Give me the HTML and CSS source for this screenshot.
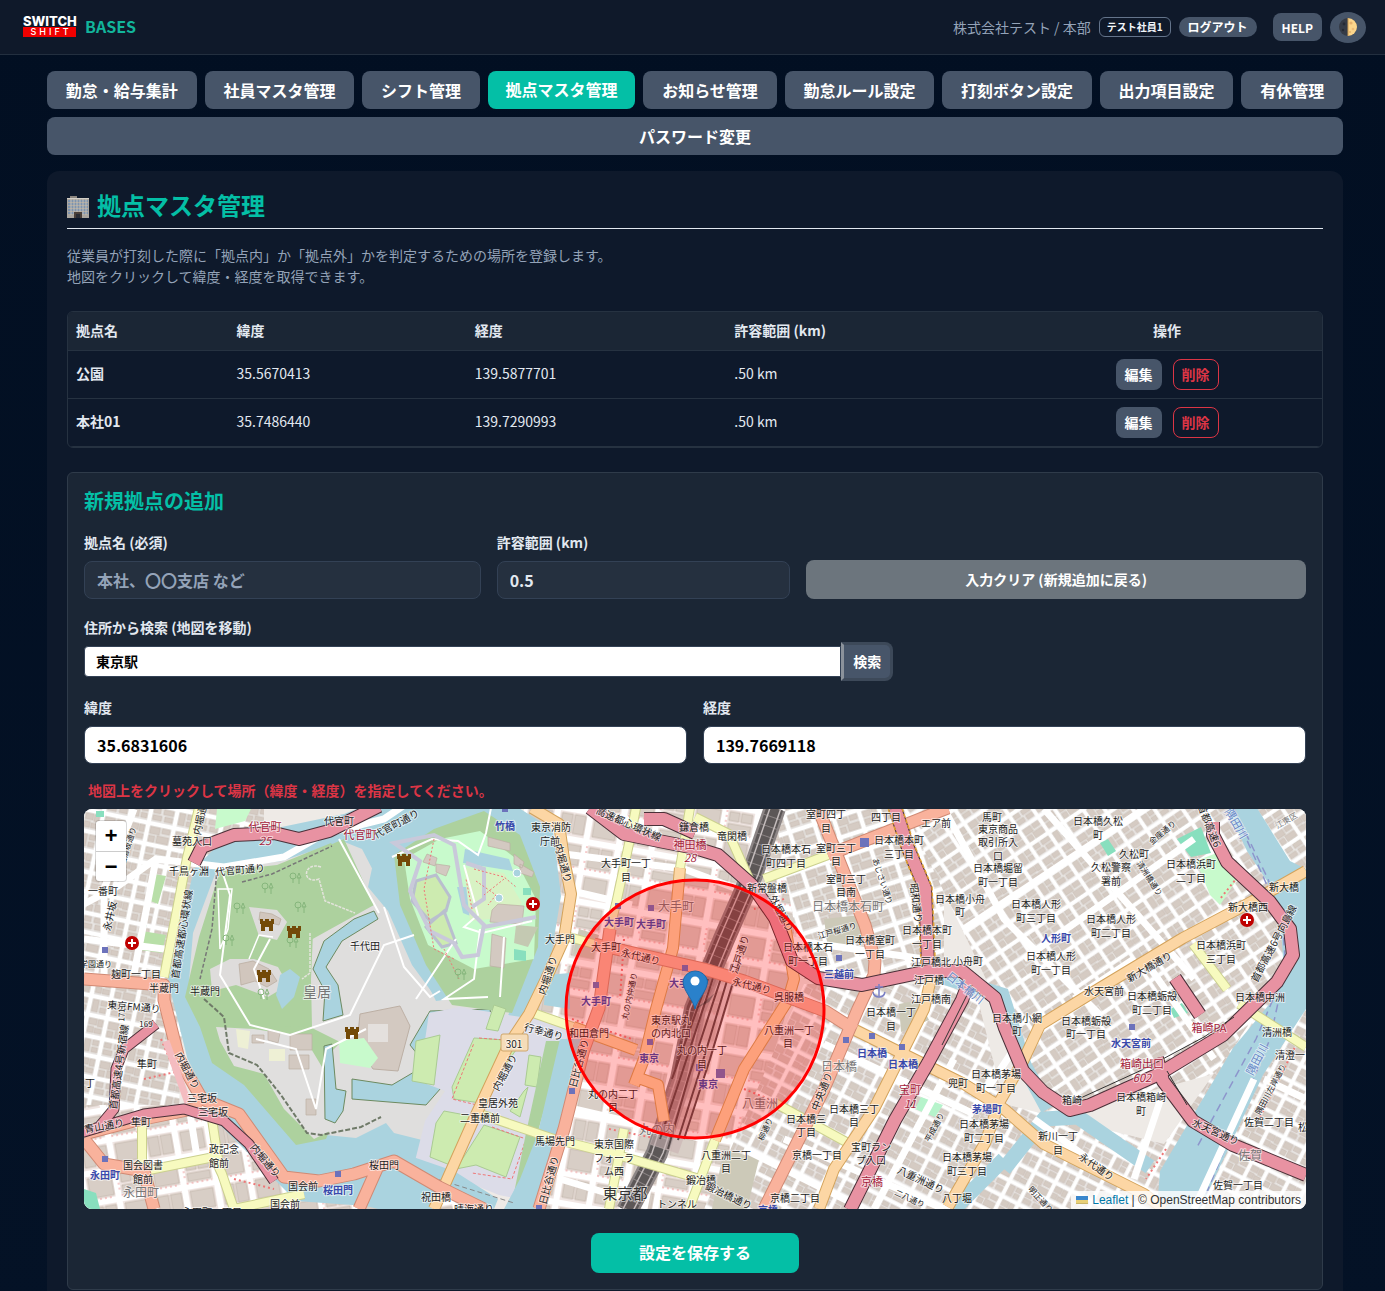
FILE: index.html
```html
<!DOCTYPE html>
<html lang="ja">
<head>
<meta charset="utf-8">
<meta name="viewport" content="width=device-width, initial-scale=1">
<title>拠点マスタ管理</title>
<link rel="stylesheet" href="styles.css">
</head>
<body>
<header class="topbar">
  <div class="brand">
    <div class="logo"><span class="logo-top">SWITCH</span><span class="logo-bottom">SHIFT</span></div>
    <span class="brand-name">BASES</span>
  </div>
  <div class="account">
    <span class="company">株式会社テスト / 本部</span>
    <span class="user-badge">テスト社員1</span>
    <button class="logout" type="button">ログアウト</button>
    <button class="help" type="button">HELP</button>
    <button class="theme" type="button" aria-label="テーマ切替">
      <svg width="18" height="18" viewBox="0 0 18 18"><circle cx="9" cy="9" r="9" fill="#353b46"/><path d="M9 0a9 9 0 0 1 0 18z" fill="#fbd58b"/><path d="M9 0v18" stroke="#c99a54" stroke-width="1"/><circle cx="12" cy="5" r="1.6" fill="#e6b06c"/><circle cx="14" cy="11" r="1.3" fill="#edbb76"/><circle cx="11" cy="14" r="1" fill="#e6b06c"/><circle cx="5" cy="6" r="1.4" fill="#252a34"/><circle cx="4" cy="12" r="1.2" fill="#252a34"/></svg>
    </button>
  </div>
</header>
<main class="container">
  <nav class="tabs">
    <a href="#">勤怠・給与集計</a>
    <a href="#">社員マスタ管理</a>
    <a href="#">シフト管理</a>
    <a href="#" class="active">拠点マスタ管理</a>
    <a href="#">お知らせ管理</a>
    <a href="#">勤怠ルール設定</a>
    <a href="#">打刻ボタン設定</a>
    <a href="#">出力項目設定</a>
    <a href="#">有休管理</a>
    <a href="#">パスワード変更</a>
  </nav>
  <section class="panel">
    <h1 class="title">
      <svg width="22" height="22" viewBox="0 0 22 22"><path d="M3 0h7v2H3z" fill="#8b8680"/><path d="M0 2h22v20H0z" fill="#aaa69f"/><path d="M0 2h22v1H0z" fill="#d3cfc7"/><g fill="#7d93ae"><path d="M1 4h20v2H1zM1 7h20v2H1zM1 10h20v2H1zM1 13h20v2H1zM1 16h20v2H1z"/></g><path d="M4 3v16M7 3v16M10 3v16M13 3v16M16 3v16M19 3v16" stroke="#c4bfb6" stroke-width="1"/><path d="M7 16h8v6H7z" fill="#4b4039"/><path d="M9 18h4v4H9z" fill="#2a2c34"/></svg>
      <span>拠点マスタ管理</span>
    </h1>
    <p class="lead">従業員が打刻した際に「拠点内」か「拠点外」かを判定するための場所を登録します。<br>地図をクリックして緯度・経度を取得できます。</p>
    <div class="table-wrap">
      <table class="bases">
        <colgroup><col class="c1"><col class="c2"><col class="c3"><col class="c4"><col class="c5"></colgroup>
        <thead><tr><th>拠点名</th><th>緯度</th><th>経度</th><th>許容範囲 (km)</th><th class="ops">操作</th></tr></thead>
        <tbody>
          <tr><td class="name">公園</td><td>35.5670413</td><td>139.5877701</td><td>.50 km</td><td class="ops"><div class="row-buttons"><button class="edit" type="button">編集</button><button class="delete" type="button">削除</button></div></td></tr>
          <tr><td class="name">本社01</td><td>35.7486440</td><td>139.7290993</td><td>.50 km</td><td class="ops"><div class="row-buttons"><button class="edit" type="button">編集</button><button class="delete" type="button">削除</button></div></td></tr>
        </tbody>
      </table>
    </div>
    <form class="card">
      <h2 class="card-title">新規拠点の追加</h2>
      <div class="grid">
        <div class="field span4"><label for="name">拠点名 (必須)</label><input id="name" class="dark" type="text" placeholder="本社、〇〇支店 など"></div>
        <div class="field span3"><label for="range">許容範囲 (km)</label><input id="range" class="dark" type="text" value="0.5"></div>
        <div class="span5 bottom"><button class="clear" type="button">入力クリア (新規追加に戻る)</button></div>
        <div class="field search-field span8"><label for="address">住所から検索 (地図を移動)</label>
          <div class="search"><input id="address" type="text" value="東京駅"><button type="button">検索</button></div></div>
        <div class="field span6"><label for="lat">緯度</label><input id="lat" class="light" type="text" value="35.6831606"></div>
        <div class="field span6"><label for="lng">経度</label><input id="lng" class="light" type="text" value="139.7669118"></div>
      </div>
      <p class="notice">地図上をクリックして場所（緯度・経度）を指定してください。</p>
      <div class="map">
        <svg class="map-canvas" viewBox="0 0 1222 400" preserveAspectRatio="xMidYMid slice" role="img" aria-label="東京駅周辺の地図">
          <defs>
            <g id="blocks">
              <rect width="46" height="40" fill="#e8e5e3"/>
              <g fill="#d5cbc3" stroke="#c6bab0" stroke-width=".6">
                <path d="M3 3h8v6H3zM12 3h5v7h-5zM3 11h6v6H3zM10 12h7v5h-7z"/>
                <path d="M23 3h10v7H23zM35 3h8v5h-8zM23 12h6v6h-6zM31 11h12v7H31z"/>
                <path d="M3 24h6v12H3zM11 24h6v5h-6zM11 31h6v5h-6z"/>
                <path d="M23 24h7v5h-7zM23 31h9v5h-9zM33 24h10v5H33zM35 31h8v5h-8z"/>
              </g>
              <path d="M0 0h46M0 21h46M0 0v40M20 0v40" stroke="#fff" stroke-width="4"/>
              <path d="M0 40h46M46 0v40" stroke="#fff" stroke-width="4"/>
            </g>
            <g id="towers">
              <rect width="66" height="60" fill="#f0e6e3"/>
              <g fill="#d8cec6" stroke="#c2b5aa" stroke-width=".8">
                <path d="M5 5h24v20H5zM38 5h10v9H38zM50 5h11v9H50zM38 17h23v8H38z"/>
                <path d="M5 35h11v19H5zM18 35h11v19H18zM38 35h23v19H38z"/>
              </g>
              <path d="M0 0h66v60H0zM33 0v60M0 30h66" fill="none" stroke="#fff" stroke-width="6"/>
              <path d="M4 27h25M36 27h26M35 4v20" stroke="#e98080" stroke-width=".8" stroke-dasharray="2 3"/>
            </g>
            <pattern id="pw" width="46" height="40" patternUnits="userSpaceOnUse" patternTransform="rotate(12)"><use href="#blocks"/></pattern>
            <pattern id="psw" width="66" height="60" patternUnits="userSpaceOnUse" patternTransform="rotate(-10)"><use href="#towers"/></pattern>
            <pattern id="pc" width="66" height="60" patternUnits="userSpaceOnUse" patternTransform="translate(4 6) rotate(10)"><use href="#towers"/></pattern>
            <pattern id="pn" width="46" height="40" patternUnits="userSpaceOnUse" patternTransform="rotate(-18)"><use href="#blocks"/></pattern>
            <pattern id="pne" width="46" height="40" patternUnits="userSpaceOnUse" patternTransform="rotate(-34) scale(.9)"><use href="#blocks"/></pattern>
            <pattern id="ps" width="46" height="40" patternUnits="userSpaceOnUse" patternTransform="rotate(27) scale(.9)"><use href="#blocks"/></pattern>
            <g id="castle"><path d="M0 0h3v2h2V0h4v2h2V0h3v5h-1v7H9V8H5v4H1V5H0z" fill="#734a08"/></g>
            <g id="hospital"><circle r="7" fill="#bf0000"/><path d="M-4 0h8M0-4v8" stroke="#fff" stroke-width="2"/></g>
            <g id="trees" fill="none" stroke="#86b67c" stroke-width="1"><path d="M3 10V5M0 3a3 3 0 0 1 6 0 3 3 0 0 1-6 0M9 11V4M7 5l2-5 2 5z"/></g>
            <path id="secondary" d="M115-1l-12 50-23 119M552-1l-6 31-14 65-8 31M485 128l25 7M606-1l-10 60M611 8l34 17 20 45M680 70l64-24M449 204l40 14M393 304l77 26 60 15 86 25M691 294l73 40M1109 135l34 45M1155 195l67 43M60 362l70-14 8 17 12 35 70-15M58 315v45M128 310l6 40M540 320l-15 80M631 331l-26 69"/>
            <path id="primary" d="M448-1l27 16 5 35 7 35-7 45-18 40-17 35-20 30-35 75-40 90M596 59l-7 80-17 61-12 50-10 26M489 218l63 23M552 268l22 8 6 36M700 110l10 60-6 21-44 69-29 71M848 165l-8 35-25 50-25 50-40 60-15 40M771 221l109 54 40 25 40 35 100 50 20 15M1222 62l-53 30-70 37-83 50-60 37-17 36-23 40-15 42-37 64"/>
            <path id="trunk" d="M0 170l40 3 40 3v15l15 59 23 40 37 15 25 35 20 28 35 4 35-7 40-13 45 26 45 22M0 325l50-13 68-14M0 330l20 25 40 7 10 38M295 355l-20 45M526 120l-11 79-15 41-20 80-25 80M510 135l110 25 40 12 81 30 30 19M734-1l20 50 27 67 10 36-1 14-16 34-34 80-50 100-10 20M744 46L864-1"/>
            <path id="express" d="M110 54l8-16 32-12 40-2 25 6 30-8 50-25M506-1l34 26 40 8 31 6 23 7 34 30 23 33 17 43 26 17 44 7 66-14h34l33 27 10 30 18 43 20 21 27 18 20-5 67-30 66-40 54-53 16-27-3-26-20-27-43-40-14-27v-13M560 10h20l31 14M1073 249l6 23 30 40 40 24 73 30M1091 169l25 37M811-1l13 40 17 40 3 76M888 165l-10 26-34 63-33 57-45 90"/>
            <path id="shinjuku" d="M72 215l-32 25-8 20-2 40-15 18-15 5 60-18 40-5 40 12 25 23 25 37"/>
            <path id="rail" d="M691-1L668 66l-28 64-29 70-14 70-24 74-30 58"/>
          </defs>

          <!-- districts -->
          <rect width="1222" height="400" fill="#eeeae6"/>
          <path d="M0 0h180v60l-80 110-5 130H0z" fill="url(#pw)"/>
          <path d="M0 296h130l80 70 110-10 60 44H0z" fill="url(#psw)"/>
          <path d="M440 0h270v180l-70 220H440z" fill="url(#pc)"/>
          <path d="M690 0h170v170H720z" fill="url(#pn)"/>
          <path d="M820 0h402v240l-260 70-60-140z" fill="url(#pne)"/>
          <path d="M720 175h170l30 120 160 40 142-200v265H620z" fill="url(#ps)"/>
          <g fill="#ccc9b8"><path d="M815 195l20-4 10 20-28 12zM640 340l35 10-12 50h-35zM495 120l20 6-6 24-20-5zM740 110l45-5 5 25-46 10z"/></g>

          <!-- water and palace grounds -->
          <path d="M110 60l30-30 120-25 15-6h160l34 22 8 66-10 60-45 95-80 170-60-15-70-5-80-80-28-60-20-80z" fill="#aad3df"/>
          <path d="M133 60l65-8 60-20 20 8 32 62 22 50 20 40 30-4 50-4-14 40-40 75-28 35-40-10-8-10-30 15-50-5-50-55-34-20-20-30-14-35 5-60z" fill="#dfdedd"/>
          <path d="M136 62l58-4 66-28 30 66-65 36-40 60 45 28 40 20-8 40-20 50-30 6-52-60-32-22-12-36-15-30 14-60z" fill="#add19e"/>
          <path d="M137 62l56-6 54-22 42 60-60 30-2 46 1 48-85-1-24-45 18-30z" fill="#add19e"/>
          <path d="M132 218l38 2 50 8 24 40 10 50-24 12-30-30-20-35-30-8-14-25z" fill="#e0dfde"/>
          <path d="M165 98l28 3 10 12-10 18-18-4zM126 160l20-10 24 0 24 8 10 18-20 12-32-12-24 6z" fill="#dedcdb"/>
          <path d="M176 103l12 2 9 5-2 6-20-5zM155 155l14-3 16 8 8 12-10 6-12-6-14 4z" fill="#d1c6bd" stroke="#bbaea2" stroke-width=".8"/>
          <path d="M240 250l60-60 18 20-10 80-60 30z" fill="#dfdedd"/>
          <path d="M276 205l40-8 10 20-12 45-25-2-16-25z" fill="#d3c9c1" stroke="#bcafa4"/>
          <path d="M284 215h20v18h-20z" fill="#e4e0dd"/>
          <path d="M255 232l25-3 14 20-8 10-30-5z" fill="#c8facc"/>
          <path d="M152 220l14 2-2 18-10-2zM185 240h16v12h-16z" fill="#eef0d5"/>
          <path d="M168 226h12v8h-12zM184 221l12 3-2 10-10-3zM206 225h22v16h-22zM205 246h20v14h-20zM222 290h10v16h-10z" fill="#d3c9c1" stroke="#bcafa4" stroke-width=".7"/>
          <g fill="#aad3df" stroke="#6d8a60" stroke-width="1">
            <path d="M240 132l30-22 20-8 4 8-36 22-16 26 12 18 5 30-20 6 2-30-12-22z"/>
            <path d="M240 237l8-2 4 45 10 2-3 20-8 12-10-4z"/>
            <path d="M268 270l40 6 34-20-16-20 20-34 60-2 2 14-40 6-16 28 20 14-30 34-74-6z"/>
            <path d="M196 166l10-6 10 8-6 20-12 12-6-14z" stroke="none"/>
          </g>
          <path d="M290 50l24 8 30 80 16 32-10 16-22-30-24-54-20-24z" fill="#aad3df"/>
          <path d="M310 46l40-26 50-18 36 24 20 52-2 60-26 66-60-8-26-40-26-60z" fill="#add19e"/>
          <path d="M320 50l36-20 40-8 34 26 22 42-2 60-60 10-46-24-18-46z" fill="#c8facc"/>
          <path d="M332 72l20-6 14 22-4 14-16 10-18-20zM342 118l18-16 12 32-14 4z" fill="#cdebb0" stroke="#b9bfce" stroke-width="3"/>
          <path d="M381 40l44 10 4 12-50-8zM373 78h12l4 30-10-4z" fill="#aad3df"/>
          <path d="M380 58l40 6 18 30-12 14-40 4z" fill="#d8f2c4"/>
          <path d="M414 95l26 2-2 18-32-2 2-12zM404 28l22 6v8l-22-5zM343 45l10 4-2 8-12-4zM352 55l14 2-4 10-10-4zM430 45l10 8-2 6-8-4zM408 125l14 4-2 30-14-2zM436 55l14 8-2 5-12-4z" fill="#d3c9c1" stroke="#bcafa4" stroke-width=".7"/>
          <path d="M430 140l12 2v10l-12-1zM439 79h8v7h-8z" fill="#88dfbe"/>
          <path d="M432 116l22 2-10 20-14-4z" fill="#c4c9b2"/>
          <circle cx="433" cy="64" r="4" fill="#aad3df" stroke="#fff"/><circle cx="415" cy="89" r="4" fill="#aad3df" stroke="#fff"/>
          <g fill="none" stroke="#fff" stroke-width="2">
            <path d="M308 48l40-18 26 2 20 14 8-22 6-30M380 56l14 50-14 12 18 6 50-12M396 120l-6 50-30 20 44-2M420 128l-4 60M372 130l-40 60M138 62l8 24-10 80 30 50 40 10 60-20 34-70 30-10"/>
            <path d="M172 230l40 10 20 60 10-60 40-20M186 130l-16 30 10 30M255 30l40 74M300 98l20 60 26 30 10-6"/>
          </g>
          <path d="M310 34l40-8 20 10 10 60 20 20-6 30-16 2-8-14-24-12-20-40 10-30zM382 54l18 6v30l-12 8M400 118l52-10" fill="none" stroke="#c9c9da" stroke-width="4"/>
          <g fill="none" stroke="#e77" stroke-width="1" stroke-dasharray="2 2"><path d="M350 30l-10 50 10 60 20 10M390 60l30 8 12 10M392 72l20 14-8 10M360 140l15 30M388 100l-6-30M420 70l-20 16"/></g>
          <path d="M158 73l30-8 60-28M133 60l-5 60-12 50" fill="none" stroke="#777" stroke-width="1.5" stroke-dasharray="4 2"/>
          <path d="M237 58c-18-6-20 18-2 12l6 22 30 12M226 124v40l-8 6" fill="none" stroke="#e4e4dc" stroke-width="1.5" stroke-dasharray="3 1"/>
          <path d="M120 190l20 18 5 36 28 12 24 30 26 38 14 2 40-8 20-10" fill="none" stroke="#6f7a68" stroke-width="2" stroke-dasharray="5 2"/>
          <path d="M134 80h14l-4 40-8 20zM165 150l10-24 14 2" fill="none" stroke="#fff" stroke-width="1.5"/>
          <use href="#trees" x="178" y="74"/><use href="#trees" x="206" y="64"/><use href="#trees" x="150" y="94"/><use href="#trees" x="211" y="93"/><use href="#trees" x="139" y="126"/><use href="#trees" x="203" y="128"/><use href="#trees" x="174" y="180"/><use href="#trees" x="371" y="160"/>

          <!-- outer garden -->
          <path d="M345 204l30-6 62 10 50 4-20 80-22 100-30-6-84-34 10-40 20-30-26-10z" fill="#dcdce8"/>
          <path d="M390 229l48 3-42 62-26-4-2-12zM410 196l12 4-8 22-12-2zM332 232l24-6-6 50-22-4zM445 246l12 2-4 30-12-2zM440 282l4-4-8 30-10-6zM360 302l32 6-26 48-20-8 6-34zM400 316l36 12-14 40-30-12-20 4z" fill="#cdebb0" stroke="#aacb93"/>
          <path d="M395 229l38 3-40 64-25-6 22-56M408 318l34 12-14 40-40-6" fill="none" stroke="#e77" stroke-dasharray="3 2"/>
          <path d="M462 232h18l-26 90-10 60-16 12 14-70z" fill="#add19e"/>
          <path d="M476 230h22l-30 110-18 60h-30l16-30 18-46z" fill="#aad3df"/>
          <path d="M300 338l70 24 44 28-4 10-110-44z" fill="#aad3df"/>
          <path d="M462 166l24-2v36l-26-4z" fill="#aad3df"/>
          <path d="M340 366l90 28" stroke="#888" stroke-dasharray="5 3"/>

          <!-- rivers -->
          <path d="M1143-1l20 43 20 30 13 34 3 43-6 37-44 53-73 123-3 38h43l63-134 43-66V60l-16-8-33-53z" fill="#aad3df"/>
          <path d="M1150 0l34 70 22 70-20 90-70 170M1158 20l40 90 4 50-30 70-60 110" fill="none" stroke="#8d95cc" stroke-width="1.5" stroke-dasharray="8 5"/>
          <path d="M920 360l40-50 34-2 72 50M840 162l78 24 22 70 24 44M870 400l50-50" fill="none" stroke="#aad3df" stroke-width="15"/>
          <path d="M1093 30l24-12 10 26-20 4z" fill="#88dfbe"/><path d="M1112 52l26-10 18 24-20 30-10-10z" fill="#c8facc"/>
          <path d="M1016 34l8-4 8 12-8 5zM1086 200l12-6 6 10-14 5zM0 380l12 4 4 16H0zM12 2h8v6h-8zM60 105l3 12-3 2z" fill="#88dfbe"/>
          <path d="M837 288l22 8-8 12-20-8z" fill="#b6f3cb"/>
          <path d="M70 65l12 2-8 28-10-4zM58 122l24 4-4 18-22-3z" fill="#b8dfa8"/><path d="M133 0h34l-6 12-30 8z" fill="#c8facc"/>
          <path d="M77 230l26 60M60 270l36-8M488 210l60 20M540 130l-4 60M590 110l-6 60M700 90l-30 10M1160 60l-24 30M1215 230l-40 80M1082 340l-20 30M660 280l50 20M525 320l50 10M150 370l40 10" fill="none" stroke="#e77" stroke-width="2" stroke-dasharray="2 3"/>

          <!-- minor roads -->
          <g fill="none" stroke="#fff" stroke-width="7">
            <path d="M0 95l34-18 38-27 68 8 60-10 40-23 60-15 22-15M72 50L50 165M50 0L20 80v86M0 130l80 10M105 298l8 50"/>
            <path d="M480 45l120 15 80 30M488 82l60 14M490 300l130 30M600 200l-40 200M476 370l60 18"/>
            <path d="M700 130l140 20M720 160l-16-30M860 0l60 110 96 96M960 0l150 170M880 120L1060 0M940 150L1110 30M990 190l60-40M1060 150l70 100M740 235l150 70M700 330l160 70M660 340l120 60M870 250l-80 150M930 240l-40 60M1180 270l42 20M1110 400l60-130M950 310l110 80M1080 280l-30 90"/>
          </g>

          <!-- railway -->
          <g fill="none">
            <use href="#rail" stroke="#8c8585" stroke-width="22"/>
            <use href="#rail" stroke="#5c5757" stroke-width="17" stroke-dasharray="9 1"/>
            <use href="#rail" x="6" stroke="#c4bcbc" stroke-width="1.5"/>
            <use href="#rail" x="-5" stroke="#c4bcbc" stroke-width="1.5"/>
            <path d="M640 160l-36 110-24 70" stroke="#c9b3b3" stroke-width="30" stroke-opacity=".6"/>
            <path d="M656 150l-30 100-26 80M648 155l-30 100-24 76M640 160l-36 110-20 70M632 160l-36 110-20 60M624 170l-36 100" stroke="#564a4a" stroke-width="2"/>
          </g>

          <!-- roads, casing first -->
          <g fill="none" stroke-linejoin="round">
            <use href="#secondary" stroke="#cbd08f" stroke-width="10"/><use href="#secondary" stroke="#f7fabf" stroke-width="8"/>
            <use href="#primary" stroke="#d3a35c" stroke-width="12"/><use href="#primary" stroke="#fcd6a4" stroke-width="10"/>
            <use href="#trunk" stroke="#d08a74" stroke-width="13"/><use href="#trunk" stroke="#f9b29c" stroke-width="11"/>
            <path d="M82 232l22 62" stroke="#f4bcc0" stroke-width="7"/>
            <use href="#express" stroke="#4b3038" stroke-width="14"/><use href="#express" stroke="#e892a2" stroke-width="12"/>
            <use href="#shinjuku" stroke="#4b3038" stroke-width="11"/><use href="#shinjuku" stroke="#e892a2" stroke-width="9"/>
            <path d="M818-1l13 39 17 40 3 70M837 155l-3-74-16-40-14-42" stroke="#e0a030" stroke-width="1.5" stroke-dasharray="4 2"/>
            <path d="M990 292l70-32 60-32 30-20M888 176l-30 60M1083 262l20 34" stroke="#333"/>
          </g>

          <!-- symbols -->
          <path fill="#6c72bb" d="M18 138h6v6h-6zM18 347h6v6h-6zM251 362h6v6h-6zM418-1h6v4h-6zM485 279h6v6h-6zM776 29h9v9h-9zM752 146h6v6h-6zM759 228h6v6h-6zM785 224h6v6h-6zM815 235h6v6h-6zM1045 215h6v6h-6zM531 94h6v6h-6zM564 96h6v6h-6zM598 156h6v6h-6zM509 173h6v6h-6zM563 230h6v6h-6zM612 255h7v7h-7zM632 260h9v9h-9zM452 396h6v4h-6z"/>
          <use href="#castle" x="176" y="110"/><use href="#castle" x="203" y="117"/><use href="#castle" x="173" y="161"/><use href="#castle" x="261" y="218"/><use href="#castle" x="313" y="45"/>
          <use href="#hospital" x="48" y="134"/><use href="#hospital" x="449" y="95"/><use href="#hospital" x="1163" y="111"/>
          <path d="M795 175v12M791 178h8M789 183q1 5 6 5t6-5" fill="none" stroke="#7b7fc4" stroke-width="1.5"/>
          <rect x="417" y="225" width="27" height="17" rx="2" fill="#f5dcb9" stroke="#cfa66a"/><text class="lb" x="430" y="234">301</text>

          <!-- labels -->
          <g class="lb">
            <text x="108" y="31">墓苑入口</text><text x="255" y="11">代官町</text><text x="105" y="61">千鳥ヶ淵</text><text x="156" y="60" transform="rotate(-5 156 60)">代官町通り</text><text x="312" y="14" transform="rotate(-28 312 14)">代官町通り</text><text x="19" y="81">一番町</text><text x="25" y="107" transform="rotate(-78 25 107)">永井坂</text><text x="12" y="154" class="sm">学園通り</text><text x="52" y="164">麹町一丁目</text><text x="80" y="178">半蔵門</text><text x="121" y="181">半蔵門</text><text x="50" y="197" transform="rotate(5 50 197)">東京FM通り</text><text x="62" y="214" class="sm">169</text><text x="37" y="206" class="sm" transform="rotate(-88 37 206)">171</text><text x="63" y="254">隼町</text><text x="116" y="6" transform="rotate(-78 116 6)">内堀通り</text><text x="104" y="261" transform="rotate(62 104 261)">内堀通り</text><text x="97" y="125" transform="rotate(-81 97 125)">首都高速都心環状線</text><text x="34" y="258" transform="rotate(-82 34 258)">首都高速4号新宿線</text><text x="118" y="288">三宅坂</text><text x="129" y="302">三宅坂</text><text x="57" y="312">隼町</text><text x="20" y="316" transform="rotate(-10 20 316)">青山通り</text><text x="140" y="339">政記念</text><text x="135" y="353">館前</text><text x="59" y="355">国会図書</text><text x="59" y="369">館前</text><text x="182" y="351" transform="rotate(50 182 351)">内堀通り</text><text x="219" y="376">国会前</text><text x="201" y="394">国会前</text><text x="300" y="355">桜田門</text><text x="281" y="136">千代田</text><text x="6" y="273">丁</text><text x="128" y="402">永田町一丁目</text><text x="43" y="37" class="sm" transform="rotate(-72 43 37)">袖摺坂通り</text>
            <text x="467" y="17">東京消防</text><text x="466" y="31">庁前</text><text x="480" y="54" transform="rotate(75 480 54)">内堀通り</text><text x="542" y="53">大手町一丁</text><text x="542" y="67">目</text><text x="476" y="129">大手門</text><text x="522" y="137">大手町</text><text x="557" y="147" transform="rotate(14 557 147)">永代通り</text><text x="463" y="166" transform="rotate(-72 463 166)">内堀通り</text><text x="460" y="222" transform="rotate(15 460 222)">行幸通り</text><text x="505" y="223">和田倉門</text><text x="420" y="263" transform="rotate(-62 420 263)">内堀通り</text><text x="414" y="293">皇居外苑</text><text x="396" y="308">二重橋前</text><text x="471" y="331">馬場先門</text><text x="494" y="254" transform="rotate(-75 494 254)">日比谷通り</text><text x="464" y="371" transform="rotate(-75 464 371)">日比谷通り</text><text x="352" y="387">祝田橋</text><text x="530" y="334">東京国際</text><text x="530" y="348">フォーラ</text><text x="530" y="361">ム西</text><text x="593" y="394">トンネル</text><text x="529" y="284">丸の内二丁</text><text x="529" y="297">目</text><text x="587" y="210">東京駅丸</text><text x="587" y="223">の内北口</text><text x="618" y="240">丸の内一丁</text><text x="618" y="254">目</text><text x="545" y="187" class="sm" transform="rotate(-78 545 187)">丸の内仲通り</text><text x="545" y="14" transform="rotate(24 545 14)">高速都心環状線</text><text x="610" y="17">鎌倉橋</text><text x="617" y="370">鍛冶橋</text><text x="645" y="386" transform="rotate(25 645 386)">鍛冶橋通り</text><text x="390" y="399">晴海通り</text>
            <text x="648" y="26">竜閑橋</text><text x="702" y="39">日本橋本石</text><text x="702" y="53">町四丁目</text><text x="742" y="4">室町四丁</text><text x="742" y="18">目</text><text x="752" y="38">室町三丁</text><text x="752" y="51">目</text><text x="762" y="69">室町三丁</text><text x="762" y="82">目南</text><text x="683" y="78">新常盤橋</text><text x="698" y="104" transform="rotate(62 698 104)">外堀通り</text><text x="802" y="7">四丁目</text><text x="815" y="30">日本橋本町</text><text x="815" y="44">三丁目</text><text x="852" y="13">エア前</text><text x="799" y="72" class="sm" transform="rotate(72 799 72)">あじさい通り</text><text x="833" y="94" transform="rotate(83 833 94)">昭和通り</text><text x="876" y="89">日本橋小舟</text><text x="876" y="102">町</text><text x="753" y="121" class="sm" transform="rotate(-16 753 121)">江戸桜通り</text><text x="786" y="130">日本橋室町</text><text x="786" y="144">一丁目</text><text x="843" y="120">日本橋本町</text><text x="843" y="134">一丁目</text><text x="724" y="137">日本橋本石</text><text x="724" y="151">町一丁目</text><text x="847" y="152">江戸橋北</text><text x="884" y="151">小舟町</text><text x="845" y="170">江戸橋</text><text x="847" y="189">江戸橋南</text><text x="655" y="145" transform="rotate(-72 655 145)">江戸通り</text><text x="668" y="176" transform="rotate(14 668 176)">永代通り</text><text x="705" y="187">呉服橋</text><text x="705" y="220">八重洲一丁</text><text x="704" y="233">目</text><text x="807" y="202">日本橋一丁</text><text x="807" y="216">目</text><text x="737" y="282" transform="rotate(-68 737 282)">中央通り</text><text x="770" y="299">日本橋三丁</text><text x="770" y="312">目</text><text x="722" y="309">日本橋三</text><text x="722" y="322">丁目</text><text x="681" y="320" class="sm" transform="rotate(-65 681 320)">柳通り</text><text x="642" y="345">八重洲二丁</text><text x="642" y="358">目</text><text x="733" y="345">京橋一丁目</text><text x="711" y="388">京橋二丁目</text><text x="787" y="337">宝町ラン</text><text x="787" y="350">プ入口</text><text x="837" y="370" transform="rotate(25 837 370)">八重洲通り</text><text x="826" y="389" class="sm" transform="rotate(25 826 389)">二八通り</text><text x="850" y="318" class="sm" transform="rotate(-62 850 318)">平成通り</text><text x="874" y="273">兜町</text><text x="912" y="264">日本橋茅場</text><text x="912" y="278">町一丁目</text><text x="900" y="314">日本橋茅場</text><text x="900" y="328">町二丁目</text><text x="883" y="347">日本橋茅場</text><text x="883" y="361">町三丁目</text><text x="873" y="388">八丁堀</text>
            <text x="908" y="7">馬町</text><text x="914" y="19">東京商品</text><text x="914" y="32">取引所入</text><text x="914" y="46">口</text><text x="914" y="58">日本橋堀留</text><text x="914" y="72">町一丁目</text><text x="1014" y="11">日本橋久松</text><text x="1014" y="25">町</text><text x="1050" y="44">久松町</text><text x="1027" y="57">久松警察</text><text x="1027" y="71">署前</text><text x="1078" y="23" class="sm" transform="rotate(-40 1078 23)">金座通り</text><text x="1066" y="69" class="sm" transform="rotate(57 1066 69)">清洲橋通り</text><text x="1107" y="54">日本橋浜町</text><text x="1107" y="68">二丁目</text><text x="1200" y="77">新大橋</text><text x="1164" y="97">新大橋西</text><text x="952" y="94">日本橋人形</text><text x="952" y="108">町三丁目</text><text x="1027" y="109">日本橋人形</text><text x="1027" y="123">町二丁目</text><text x="967" y="146">日本橋人形</text><text x="967" y="160">町一丁目</text><text x="1137" y="135">日本橋浜町</text><text x="1137" y="149">三丁目</text><text x="1065" y="157" transform="rotate(-30 1065 157)">新大橋通り</text><text x="1020" y="181">水天宮前</text><text x="1068" y="186">日本橋蛎殻</text><text x="1068" y="200">町二丁目</text><text x="1002" y="211">日本橋蛎殻</text><text x="1002" y="224">町一丁目</text><text x="1176" y="187">日本橋中洲</text><text x="933" y="208">日本橋小網</text><text x="933" y="221">町</text><text x="1193" y="222">清洲橋</text><text x="1206" y="245">清澄一</text><text x="1186" y="280" class="sm" transform="rotate(-62 1186 280)">隅田川左岸通り</text><text x="988" y="290">箱崎</text><text x="1057" y="287">日本橋箱崎</text><text x="1057" y="301">町</text><text x="974" y="326">新川一丁</text><text x="974" y="340">目</text><text x="1013" y="357" transform="rotate(35 1013 357)">永代通り</text><text x="957" y="390" class="sm" transform="rotate(48 957 390)">明正通り</text><text x="1132" y="322" transform="rotate(24 1132 322)">水天宮通り</text><text x="1185" y="312">佐賀二丁目</text><text x="1154" y="375">佐賀一丁目</text><text x="1219" y="317">松</text><text x="1189" y="134" transform="rotate(-62 1189 134)">首都高速6号向島線</text><text x="1126" y="16" transform="rotate(68 1126 16)">首都高速6</text>
          </g>
          <g class="lb area"><text x="233" y="182" class="big">皇居</text><text x="57" y="382">永田町</text><text x="592" y="96">大手町</text><text x="764" y="96">日本橋本石町</text><text x="755" y="256">日本橋</text><text x="676" y="293">八重洲</text><text x="573" y="319">丸の内</text><text x="1166" y="345">佐賀</text><text x="1202" y="11" transform="rotate(-30 1202 11)" class="sm">江東区</text></g>
          <g class="lb city"><text x="541" y="383">東京都</text></g>
          <g class="lb station"><text x="21" y="365">永田町</text><text x="254" y="380">桜田門</text><text x="421" y="16">竹橋</text><text x="535" y="112">大手町</text><text x="567" y="114">大手町</text><text x="512" y="191">大手町</text><text x="600" y="173">大手町</text><text x="565" y="248">東京</text><text x="624" y="274">東京</text><text x="755" y="164">三越前</text><text x="788" y="243">日本橋</text><text x="819" y="254">日本橋</text><text x="903" y="299">茅場町</text><text x="972" y="128">人形町</text><text x="1047" y="233">水天宮前</text><text x="684" y="400">京橋</text></g>
          <g class="lb river"><text x="882" y="178" transform="rotate(38 882 178)">日本橋川</text><text x="1153" y="14" transform="rotate(60 1153 14)">隅田川</text><text x="1172" y="250" transform="rotate(-62 1172 250)">隅田川</text></g>
          <g class="lb exit"><text x="181" y="17">代官町</text><text class="it" x="181" y="31">25</text><text x="276" y="25">代官町</text><text x="606" y="35">神田橋</text><text class="it" x="606" y="48">28</text><text x="826" y="280">宝町</text><text class="it" x="826" y="294">11</text><text x="788" y="372">京橋</text><text x="1125" y="218">箱崎PA</text><text x="1058" y="254">箱崎出口</text><text class="it" x="1058" y="268">602</text></g>

          <!-- base radius and marker -->
          <circle cx="611" cy="200" r="129" fill="#f00" fill-opacity=".25" stroke="#f00" stroke-width="3"/>
          <path d="M611 200l8-6 12-10-6 9z" fill="#000" fill-opacity=".25"/>
          <path d="M611 200c-2-10-12-18-12-28a12.500 12.500 0 0 1 24.500 0c0 10-10 18-12.500 28z" fill="#2a81cb" stroke="#2069a8"/>
          <circle cx="611" cy="172" r="4.500" fill="#fff"/>
        </svg>
        <div class="zoom"><button type="button" aria-label="拡大">+</button><button type="button" aria-label="縮小">−</button></div>
        <div class="credit"><svg width="12" height="8" viewBox="0 0 12 8"><path fill="#3a86cc" d="M0 0h12v4H0z"/><path fill="#e8cf76" d="M0 4h12v3H0z"/><path fill="#c9b56a" d="M0 7h12v1H0z"/></svg><a href="#">Leaflet</a> | © OpenStreetMap contributors</div>
      </div>
      <div class="actions"><button class="save" type="submit">設定を保存する</button></div>
    </form>
  </section>
</main>
</body>
</html>
```
FILE: styles.css
```css
* { box-sizing: border-box; }
body {
  margin: 0;
  background: linear-gradient(#020f22, #041226);
  color: #e2e8f0;
  font: 14px/21px "Noto Sans CJK JP", sans-serif;
}
button, input { font: inherit; color: inherit; margin: 0; }
button { cursor: pointer; border: 0; font-weight: 700; }
h1, h2, p { margin: 0; }

.topbar {
  display: flex;
  justify-content: space-between;
  align-items: center;
  height: 55px;
  padding: 0 19px 0 23px;
  background: #0f192a;
  border-bottom: 1px solid #232f3f;
}
.brand { display: flex; align-items: center; gap: 9px; padding-bottom: 2px; }
.logo { display: flex; flex-direction: column; width: 53px; font-family: Inter, sans-serif; text-align: center; }
.logo-top { font-size: 13px; font-weight: 800; line-height: 12px; color: #fff; }
.logo-bottom { font-size: 9px; line-height: 10px; font-weight: 500; letter-spacing: 3px; padding-left: 3px; background: #f00000; color: #fff; }
.brand-name { font-size: 16px; font-weight: 700; color: #12b59b; }
.account { display: flex; align-items: center; gap: 8px; }
.company { color: #94a3b8; }
.user-badge { border: 1px solid #64748b; border-radius: 6px; padding: 0 7px; font-size: 10px; line-height: 18px; font-weight: 700; color: #f1f5f9; }
.logout { height: 20px; padding: 0 9px; border-radius: 10px; background: #475569; color: #fff; font-size: 12px; line-height: 20px; }
.help { height: 28px; margin-left: 8px; padding: 0 9px; border-radius: 8px; background: #475569; color: #fff; font-size: 12px; }
.theme { display: flex; align-items: center; justify-content: center; width: 36px; height: 31px; padding: 0; border-radius: 50%; background: #475569; }

.container { padding: 16px 42px 16px 47px; }
.tabs { display: flex; flex-wrap: wrap; gap: 8px; }
.tabs a {
  flex: 1 1 auto;
  padding: 0 18px;
  border-radius: 8px;
  background: #475569;
  color: #fff;
  font-size: 16px;
  font-weight: 700;
  line-height: 38px;
  text-align: center;
  text-decoration: none;
}
.tabs a.active { padding: 0 17px; background: #04bfa6; line-height: 36px; }

.panel { margin-top: 16px; padding: 20px; border-radius: 12px; background: #0e192b; }
.title { display: flex; align-items: center; gap: 8px; height: 38px; padding-bottom: 10px; border-bottom: 1px solid #e2e8f0; color: #04bfa6; font-size: 24px; line-height: 27px; }
.title svg { margin-top: 5px; }
.lead { margin: 16px 0 24px; color: #94a3b8; }

.table-wrap { overflow: hidden; border: 1px solid #263241; border-radius: 6px; }
.bases { width: 100%; table-layout: fixed; border-collapse: collapse; }
.c1 { width: 12.8%; } .c2 { width: 19%; } .c3 { width: 20.7%; } .c4 { width: 22.8%; } .c5 { width: 24.7%; }
.bases th, .bases td { padding: 0 8px; text-align: left; border-bottom: 1px solid #263241; }
.bases th { height: 38px; background: #1b2635; font-weight: 700; }
.bases td { height: 48px; padding-bottom: 2px; }
.bases .name { font-weight: 700; }
.bases .ops { padding-bottom: 0; text-align: center; }
.row-buttons { display: flex; justify-content: center; gap: 11px; }
.row-buttons button { height: 31px; padding: 0 9px; border-radius: 8px; }
.edit { background: #475569; color: #fff; }
.row-buttons .delete { padding: 0 8px; border: 1px solid #dc3545; background: transparent; color: #dc3545; }

.card { margin-top: 24px; padding: 16px; border: 1px solid #2f3b4a; border-radius: 6px; background: #1b2635; }
.card-title { color: #04bfa6; font-size: 20px; line-height: 24px; }
.grid { display: grid; grid-template-columns: repeat(12, 1fr); gap: 16px; margin-top: 19px; }
.span3 { grid-column: span 3; }
.span4 { grid-column: span 4; }
.span5 { grid-column: span 5; }
.span6 { grid-column: span 6; }
.span8 { grid-column: span 8; }
.field { display: flex; flex-direction: column; gap: 8px; min-width: 0; }
.field label { font-weight: 700; }
.field input { width: 100%; border: 1px solid #334155; font-weight: 700; padding: 0 12px; }
.dark { height: 38px; border-radius: 8px; background: #25303f; font-size: 16px; }
.dark::placeholder { color: #94a3b8; opacity: 1; font-weight: 700; }
.light { height: 38px; border-radius: 8px; background: #fff; color: #000; font-size: 16px; }
.bottom { display: flex; align-items: flex-end; }
.clear { width: 100%; height: 39px; border-radius: 8px; background: #6c757d; color: #fff; }
.search-field { margin-top: 2px; gap: 4px; }
.search { display: flex; align-items: center; }
.field .search input { flex: 1; min-width: 0; height: 31px; padding: 0 11px; border-radius: 4px 0 0 4px; background: #fff; color: #000; }
.search button { height: 39px; padding: 0 9px; border: 3px solid #3d4959; border-left-color: #8b929b; border-radius: 0 8px 8px 0; background: #475569; color: #fff; }
.notice { margin: 16px 0 8px 4px; color: #dc3545; font-weight: 700; }

.map { position: relative; overflow: hidden; height: 400px; border-radius: 8px; }
.map-canvas { display: block; width: 100%; height: 100%; }
.zoom { position: absolute; left: 12px; top: 12px; width: 30px; border-radius: 3px; background: #fff; box-shadow: 0 0 0 1px rgba(0, 0, 0, .15); }
.zoom button { display: block; width: 30px; height: 30px; padding: 4px 0 0; background: transparent; color: #000; font: bold 22px/26px "Liberation Mono", monospace; }
.zoom button + button { border-top: 1px solid #ccc; }
.credit { position: absolute; right: 0; bottom: 0; padding: 0 5px; background: rgba(255, 255, 255, .8); color: #333; font: 12px/18px "Liberation Sans", sans-serif; }
.credit svg { margin-right: 4px; }
.credit a { color: #0078a8; text-decoration: none; }

.lb { font: 10px "Noto Sans CJK JP", sans-serif; fill: #222; text-anchor: middle; dominant-baseline: central; paint-order: stroke; stroke: #fff; stroke-width: 2px; stroke-opacity: .6; stroke-linejoin: round; }
.lb .sm { font-size: 8px; }
.area { font-size: 12px; fill: #777; }
.area .big { font-size: 14px; }
.city { font-size: 15px; fill: #333; }
.station { fill: #3949ab; font-weight: 700; }
.river { font-size: 11px; fill: #6688c8; }
.exit { font-size: 11px; fill: #a5233c; }
.it { font-style: italic; }

.actions { display: flex; justify-content: center; margin-top: 24px; }
.save { height: 40px; padding: 0 48px; border-radius: 8px; background: #04bfa6; color: #fff; font-size: 16px; }
```
